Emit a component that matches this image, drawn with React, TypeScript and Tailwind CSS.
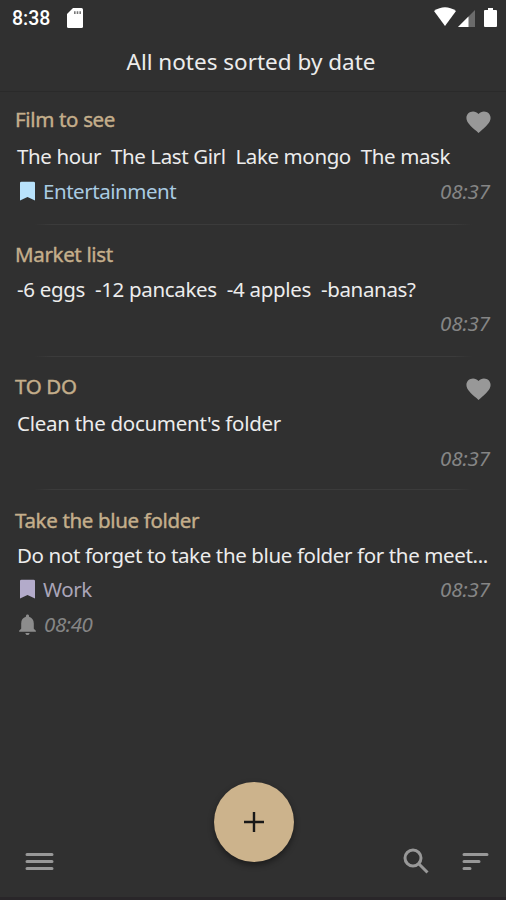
import React from "react";

const BOOKMARK = "M0 1.5A1.5 1.5 0 0 1 1.5 0h13A1.5 1.5 0 0 1 16 1.5V20l-8-3.6L0 20z";
const HEART =
  "M12 21.35l-1.45-1.32C5.4 15.36 2 12.28 2 8.5 2 5.42 4.42 3 7.5 3c1.74 0 3.41.81 4.5 2.09C13.09 3.81 14.76 3 16.5 3 19.58 3 22 5.42 22 8.5c0 3.78-3.4 6.86-8.55 11.54L12 21.35z";

type Note = {
  title: string;
  titleClass: string;
  body: string;
  bodyClass: string;
  time: string;
  loved?: boolean;
  tag?: string;
  tagClass?: string;
  alarm?: string;
  sizeClass: string;
};

const notes: Note[] = [
  {
    title: "Film to see",
    titleClass: "h-[37px]",
    body: "The hour  The Last Girl  Lake mongo  The mask",
    bodyClass: "h-[36px] tracking-[-0.39px]",
    time: "08:37",
    loved: true,
    tag: "Entertainment",
    tagClass: "text-[#a9cbe2] tracking-[-0.46px]",
    sizeClass: "h-[133px] pt-[9px]",
  },
  {
    title: "Market list",
    titleClass: "h-[35px]",
    body: "-6 eggs  -12 pancakes  -4 apples  -bananas?",
    bodyClass: "h-[34px] tracking-[-0.33px]",
    time: "08:37",
    sizeClass: "h-[132px] pt-[12px]",
  },
  {
    title: "TO DO",
    titleClass: "h-[37px]",
    body: "Clean the document's folder",
    bodyClass: "h-[36px] tracking-[-0.28px]",
    time: "08:37",
    loved: true,
    sizeClass: "h-[133px] pt-[11px]",
  },
  {
    title: "Take the blue folder",
    titleClass: "h-[36px]",
    body: "Do not forget to take the blue folder for the meet...",
    bodyClass: "h-[34px] tracking-[-0.37px]",
    time: "08:37",
    tag: "Work",
    tagClass: "text-[#aaa5b8] tracking-[-0.4px]",
    alarm: "08:40",
    sizeClass: "h-[170px] pt-[12px]",
  },
];

function StatusBar() {
  return (
    <div className="flex h-9 items-center pr-[9px] pl-3">
      <span className="pt-px font-[Roboto] text-[19.5px] leading-9 font-medium text-white">8:38</span>
      <svg className="ml-[17px]" width="16" height="20" viewBox="0 0 16 20">
        <path d="M6 0h8.5Q16 0 16 1.5v17q0 1.500-1.500 1.500h-13Q0 20 0 18.500V6z" fill="#fff" />
        <path d="M7 3.200h1.600v2.800H7zM9.700 3.200h1.600v2.800H9.700zM12.400 3.200H14v2.800h-1.600z" fill="#777" />
      </svg>
      <div className="flex-1" />
      <svg className="mb-[3px]" width="22" height="19" viewBox="0 0 22 19">
        <path d="M0 4Q11-3.500 22 4L11 19z" fill="#fff" />
      </svg>
      <svg className="ml-[2px]" width="17" height="17" viewBox="0 0 17 17">
        <path d="M17 0v17H0z" fill="#6b6b6b" />
        <path d="M10.500 6.500V17H0z" fill="#fff" />
      </svg>
      <svg className="mb-[2px] ml-[9px]" width="13" height="19" viewBox="0 0 13 19">
        <path d="M4 0h5v2h3q1 0 1 1v15q0 1-1 1H1q-1 0-1-1V3q0-1 1-1h3z" fill="#fff" />
      </svg>
    </div>
  );
}

function NoteItem({ note, last }: { note: Note; last: boolean }) {
  return (
    <article className={`flex flex-col ${note.sizeClass}`}>
      <div className={`flex items-center justify-between pr-[13px] pl-[15px] ${note.titleClass}`}>
        <h2 className="text-[20.5px] leading-none tracking-[-0.34px] text-[#c4ae8b] [-webkit-text-stroke:0.4px_#c4ae8b]">
          {note.title}
        </h2>
        {note.loved && (
          <svg className="mt-[4px]" width="29" height="28" viewBox="0 0 24 24" preserveAspectRatio="none" fill="#989898">
            <path d={HEART} />
          </svg>
        )}
      </div>
      <p className={`flex items-center pl-[17px] text-[20.5px] leading-none whitespace-pre text-[#ececec] ${note.bodyClass}`}>
        {note.body}
      </p>
      <div className="flex h-[34px] items-center justify-between pr-4 pl-5">
        {note.tag ? (
          <span className={`flex items-center gap-[8px] text-[20.5px] leading-none ${note.tagClass}`}>
            <svg width="15" height="20" viewBox="0 0 16 20" fill={note.tag === "Work" ? "#b3abca" : "#b8e2fb"}>
              <path d={BOOKMARK} />
            </svg>
            {note.tag}
          </span>
        ) : (
          <span />
        )}
        <time className="text-[20.5px] leading-none tracking-[-0.1px] text-[#858585] italic">{note.time}</time>
      </div>
      {note.alarm && (
        <div className="flex h-[37px] items-center gap-[8px] pl-[19px] text-[20.5px] leading-none tracking-[-0.4px] text-[#858585] italic">
          <svg width="17" height="21" viewBox="4 2 16 20" fill="#8c8c8c">
            <path d="M12 22c1.100 0 2-.9 2-2h-4c0 1.100.9 2 2 2zm6-6v-5c0-3.070-1.630-5.640-4.500-6.320V4c0-.83-.67-1.500-1.500-1.500s-1.500.67-1.500 1.500v.68C7.640 5.360 6 7.920 6 11v5l-2 2v1h16v-1z" />
          </svg>
          {note.alarm}
        </div>
      )}
      {!last && <div className="mx-[34px] mt-auto h-px bg-[linear-gradient(90deg,transparent,#3b3b3b_4%,#3b3b3b_96%,transparent)]" />}
    </article>
  );
}

export default function App() {
  return (
    <div className="flex h-[900px] w-[506px] flex-col overflow-hidden bg-[#303030] font-['Noto_Sans',sans-serif]">
      <StatusBar />
      <header className="flex h-14 items-center justify-center border-b border-[#2a2a2a] pr-[4px] pb-[3px]">
        <h1 className="text-[22.5px] leading-none text-[#ececec]">All notes sorted by date</h1>
      </header>
      <main className="flex-1">
        {notes.map((note, i) => (
          <NoteItem key={note.title} note={note} last={i === notes.length - 1} />
        ))}
      </main>
      <footer className="grid h-[118px] grid-cols-3 border-b-[3px] border-[#292629]">
        <div className="flex items-end pb-[26px] pl-[25px]">
          <svg width="29" height="19" viewBox="0 0 29 19" stroke="#989898" strokeWidth="3" strokeLinecap="round">
            <path d="M2 2.500h25M2 9.500h25M2 16.500h25" />
          </svg>
        </div>
        <div className="flex justify-center pl-[2px]">
          <button className="flex size-20 items-center justify-center rounded-full bg-[#ccb38c] shadow-[0_3px_6px_rgba(0,0,0,0.45)]">
            <svg width="20" height="20" viewBox="0 0 20 20" stroke="#181818" strokeWidth="2.4">
              <path d="M10 0v20M0 10h20" />
            </svg>
          </button>
        </div>
        <div className="flex items-end justify-end pr-[17px] pb-[23px]">
          <svg className="mr-[33px]" width="26" height="26" viewBox="0 0 26 26" fill="none" stroke="#989898" strokeWidth="3">
            <circle cx="10" cy="10" r="8" />
            <path d="M15.500 15.500l9 9" />
          </svg>
          <svg className="mb-[3px]" width="27" height="19" viewBox="0 0 27 19" stroke="#989898" strokeWidth="3" strokeLinecap="round">
            <path d="M2 2.500h23M2 9.500h15M2 16.500h6" />
          </svg>
        </div>
      </footer>
    </div>
  );
}
